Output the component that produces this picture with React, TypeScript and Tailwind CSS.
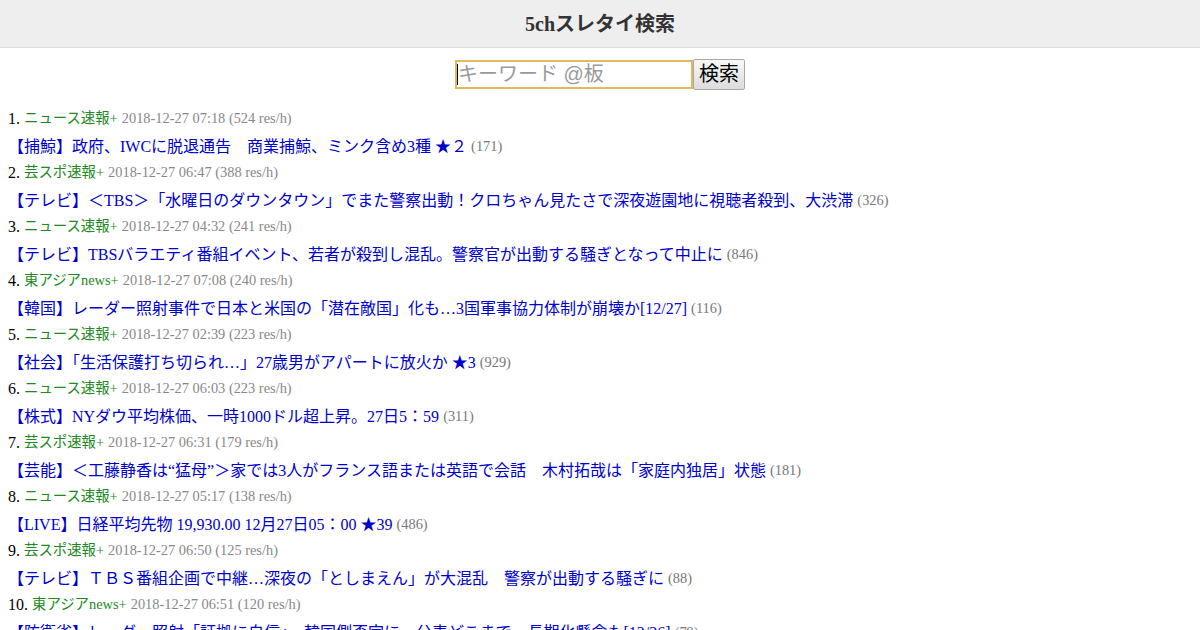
import React from "react";

const items = [
  { board: "ニュース速報+", date: "2018-12-27 07:18", rate: "524", title: "【捕鯨】政府、IWCに脱退通告　商業捕鯨、ミンク含め3種 ★２", count: "171" },
  { board: "芸スポ速報+", date: "2018-12-27 06:47", rate: "388", title: "【テレビ】＜TBS＞「水曜日のダウンタウン」でまた警察出動！クロちゃん見たさで深夜遊園地に視聴者殺到、大渋滞", count: "326" },
  { board: "ニュース速報+", date: "2018-12-27 04:32", rate: "241", title: "【テレビ】TBSバラエティ番組イベント、若者が殺到し混乱。警察官が出動する騒ぎとなって中止に", count: "846" },
  { board: "東アジアnews+", date: "2018-12-27 07:08", rate: "240", title: "【韓国】レーダー照射事件で日本と米国の「潜在敵国」化も…3国軍事協力体制が崩壊か[12/27]", count: "116" },
  { board: "ニュース速報+", date: "2018-12-27 02:39", rate: "223", title: "【社会】「生活保護打ち切られ…」27歳男がアパートに放火か ★3", count: "929" },
  { board: "ニュース速報+", date: "2018-12-27 06:03", rate: "223", title: "【株式】NYダウ平均株価、一時1000ドル超上昇。27日5：59", count: "311" },
  { board: "芸スポ速報+", date: "2018-12-27 06:31", rate: "179", title: "【芸能】＜工藤静香は“猛母”＞家では3人がフランス語または英語で会話　木村拓哉は「家庭内独居」状態", count: "181" },
  { board: "ニュース速報+", date: "2018-12-27 05:17", rate: "138", title: "【LIVE】日経平均先物 19,930.00 12月27日05：00 ★39", count: "486" },
  { board: "芸スポ速報+", date: "2018-12-27 06:50", rate: "125", title: "【テレビ】ＴＢＳ番組企画で中継…深夜の「としまえん」が大混乱　警察が出動する騒ぎに", count: "88" },
  { board: "東アジアnews+", date: "2018-12-27 06:51", rate: "120", title: "【防衛省】レーダー照射「証拠に自信」、韓国側否定に…公表どこまで　長期化懸念も[12/26]", count: "79" },
];

export default function App() {
  return (
    <div className="h-[630px] overflow-hidden bg-white text-black" style={{ fontFamily: '"Liberation Serif", "Noto Sans CJK JP", serif' }}>
      <header className="h-[48px] bg-[#eeeeee] border-b border-[#dddddd] flex items-center justify-center">
        <h1 className="text-[20px] font-bold text-[#333333]">5chスレタイ検索</h1>
      </header>
      <form className="flex justify-center items-center mt-[10px] h-[32px]" onSubmit={(e) => e.preventDefault()}>
        <div className="relative">
          <input
            type="text"
            placeholder="キーワード @板"
            className="block w-[238px] h-[29px] border-2 border-[#e3b860] outline-none px-[1px] text-[20px] placeholder:text-[#9a9a9a] bg-white"
            style={{ fontFamily: '"Liberation Sans", "Noto Sans CJK JP", sans-serif' }}
          />
          <span className="absolute left-[2px] top-[4px] w-[1px] h-[21px] bg-black" />
        </div>
        <button
          type="submit"
          className="h-[31px] px-[5px] border border-[#a8a8a8] rounded-[2px] bg-gradient-to-b from-[#f8f8f8] to-[#dcdcdc] text-[20px] text-black leading-none"
          style={{ fontFamily: '"Liberation Sans", "Noto Sans CJK JP", sans-serif' }}
        >
          検索
        </button>
      </form>
      <ol className="mt-[16px] px-[8px]">
        {items.map((it, i) => (
          <li key={i}>
            <div className="h-[26px] flex items-center whitespace-nowrap">
              <span className="text-[16px]">{i + 1}.</span>
              <span className="text-[14.4px] text-[#228822] ml-[4px]">{it.board}</span>
              <span className="text-[14.4px] text-[#888888] ml-[4px]">
                {it.date} ({it.rate} res/h)
              </span>
            </div>
            <div className="h-[28px] flex items-center whitespace-nowrap">
              <a href="#" className="text-[16px] text-[#0000cc] pt-[1px]">{it.title}</a>
              <span className="text-[14.4px] text-[#777777] ml-[4px] pt-[1px]">({it.count})</span>
            </div>
          </li>
        ))}
      </ol>
    </div>
  );
}
